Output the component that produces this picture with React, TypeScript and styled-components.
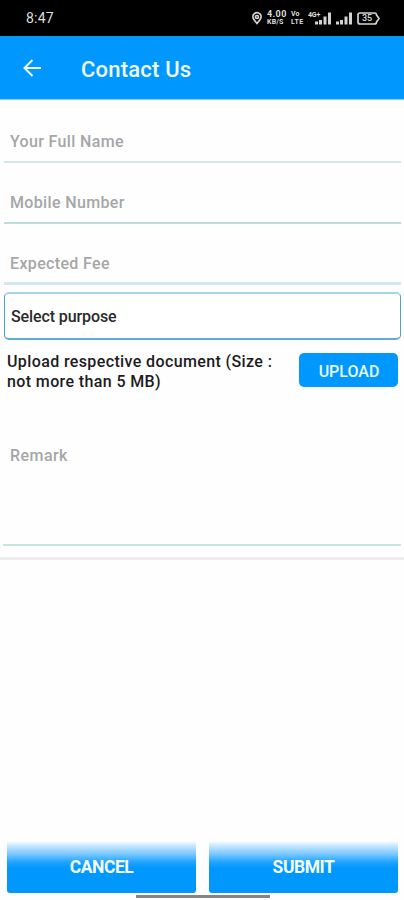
import React from "react";
import styled, { createGlobalStyle } from "styled-components";

const GlobalStyle = createGlobalStyle`
  *, *::before, *::after { box-sizing: border-box; }
  body { margin: 0; background: #fefefe; font-family: Roboto, "Liberation Sans", sans-serif; }
  button, input, textarea { font-family: inherit; }
`;

const Screen = styled.div`
  position: relative;
  display: flex;
  flex-direction: column;
  width: 404px;
  height: 900px;
  overflow: hidden;
  background: #fefefe;
`;

const StatusBar = styled.div`
  display: flex;
  justify-content: space-between;
  height: 36px;
  flex: none;
  padding: 0 24px 0 26px;
  background: #000;
  color: #dedede;
`;

const Clock = styled.span`
  font-size: 14px;
  line-height: 37px;
  letter-spacing: 0.2px;
`;

const StatusIcons = styled.div`
  display: flex;
  align-items: flex-start;
  padding-top: 11px;
`;

const PinIcon = styled.svg`
  width: 10px;
  height: 14px;
  margin-right: 5px;
`;

const Stack = styled.div<{ $width: number; $gap: number }>`
  display: flex;
  flex-direction: column;
  width: ${(p) => p.$width}px;
  margin: -1px ${(p) => p.$gap}px 0 0;
  font-weight: 700;
  white-space: nowrap;
`;

const StackLine = styled.span<{ $size: number; $height: number; $spacing?: number }>`
  font-size: ${(p) => p.$size}px;
  line-height: ${(p) => p.$height}px;
  letter-spacing: ${(p) => p.$spacing ?? 0}px;
`;

const NetworkLabel = styled.span`
  width: 12px;
  margin-right: -5px;
  font-size: 7px;
  font-weight: 700;
  line-height: 8px;
  letter-spacing: -0.2px;
  white-space: nowrap;
`;

const Bars = styled.svg<{ $gap: number }>`
  width: 16px;
  height: 14px;
  margin-right: ${(p) => p.$gap}px;
`;

const Battery = styled.div`
  position: relative;
  width: 23px;
  height: 14px;
  font-size: 9px;
  font-weight: 500;
  line-height: 15px;
  padding-left: 5px;
`;

const BatteryShape = styled.svg`
  position: absolute;
  inset: 0;
  width: 23px;
  height: 14px;
`;

const AppBar = styled.header`
  display: flex;
  align-items: center;
  height: 63px;
  flex: none;
  padding-left: 22px;
  background: #0098ff;
  color: #effbff;
`;

const BackButton = styled.button`
  display: flex;
  width: 22px;
  height: 22px;
  padding: 0;
  border: 0;
  background: none;
  color: inherit;
`;

const Title = styled.h1`
  margin: 4px 0 0 37px;
  font-size: 22px;
  font-weight: 500;
  line-height: 30px;
  letter-spacing: 0.2px;
`;

const Form = styled.main`
  display: flex;
  flex-direction: column;
  flex: none;
  height: 461px;
  padding: 2px 3px 0 4px;
  border-top: 1px solid #8bd0ff;
  border-bottom: 3px solid #ededed;
`;

const Field = styled.input<{ $line: string; $weight: number }>`
  display: block;
  width: 397px;
  height: 61px;
  padding: ${(p) => 17 + p.$weight}px 6px 0;
  border: 0;
  border-bottom: ${(p) => p.$weight}px solid ${(p) => p.$line};
  background: transparent;
  font-size: 16px;
  font-weight: 500;
  letter-spacing: 0.35px;
  outline: 0;
  &::placeholder { color: #a6a6a6; opacity: 1; }
`;

const Select = styled.button`
  height: 48px;
  width: 397px;
  margin-top: 7px;
  padding: 0 6px;
  flex: none;
  border: 1.5px solid #4ca4cd;
  border-top: 2px solid #a5d3e6;
  border-bottom: 2px solid #5fadcf;
  border-radius: 5px;
  background: #fff;
  color: #2a2a2a;
  text-align: left;
  font-size: 16px;
  font-weight: 500;
  letter-spacing: -0.1px;
`;

const UploadRow = styled.div`
  display: flex;
  justify-content: space-between;
  height: 48px;
  padding: 12px 3px 0;
`;

const UploadLabel = styled.p`
  width: 280px;
  margin: 0;
  color: #1c1c1c;
  font-size: 16px;
  font-weight: 500;
  line-height: 19.5px;
  letter-spacing: 0.38px;
  white-space: nowrap;
`;

const UploadButton = styled.button`
  width: 99px;
  height: 34px;
  flex: none;
  margin-top: 1px;
  padding: 2px 0 0 1px;
  border: 0;
  border-radius: 5px;
  background: #0098ff;
  color: #e8f9ff;
  font-size: 16px;
  font-weight: 500;
`;

const Remark = styled.textarea`
  display: block;
  width: 398px;
  height: 108px;
  margin: 50px 0 0 -1px;
  padding: 8px 7px;
  border: 0;
  border-bottom: 2px solid #c5e5dd;
  background: transparent;
  resize: none;
  outline: 0;
  font-size: 16px;
  font-weight: 500;
  line-height: 20px;
  letter-spacing: 0.45px;
  &::placeholder { color: #a6a6a6; opacity: 1; }
`;

const Actions = styled.footer`
  display: flex;
  gap: 13px;
  margin-top: auto;
  padding: 0 6px 7px 7px;
`;

const ActionButton = styled.button`
  flex: 1;
  height: 52px;
  padding: 0;
  border: 0;
  border-radius: 3px;
  background: linear-gradient(#fff 0, #d8efff 3px, #84ccff 12px, #22a4ff 21px, #0098ff 27px);
  color: #f5fcff;
  font-size: 17.5px;
  font-weight: 700;
  letter-spacing: -0.45px;
`;

const HomeIndicator = styled.div`
  position: absolute;
  left: 136px;
  bottom: 2px;
  width: 134px;
  height: 3px;
  background: #858585;
`;

const SignalBars = ({ gap }: { gap: number }) => (
  <Bars $gap={gap} viewBox="0 0 16 14" fill="#d2d2d2">
    <rect x="0" y="10.5" width="3" height="3" />
    <rect x="4" y="9" width="3" height="4.500" />
    <rect x="8.500" y="5.500" width="3" height="8" />
    <rect x="13" y="1.500" width="3" height="12" />
  </Bars>
);

export default function App() {
  return (
    <>
      <GlobalStyle />
      <Screen>
        <StatusBar>
          <Clock>8:47</Clock>
          <StatusIcons>
            <PinIcon viewBox="0 0 10 14" fill="none" stroke="#d5d5d5" strokeWidth="1.7">
              <path d="M5 12.500 2.200 9C.5 6.800.6 4.200 2 3c1.700-1.800 4.300-1.800 6 0 1.400 1.200 1.500 3.800-.2 6Z" />
              <circle cx="5" cy="6" r="1.5" />
            </PinIcon>
            <Stack $width={20} $gap={4}>
              <StackLine $size={9} $height={8} $spacing={0.4}>4.00</StackLine>
              <StackLine $size={7} $height={8} $spacing={0.2}>KB/S</StackLine>
            </Stack>
            <Stack $width={14} $gap={3}>
              <StackLine $size={7} $height={8}>Vo</StackLine>
              <StackLine $size={7} $height={8} $spacing={0.4}>LTE</StackLine>
            </Stack>
            <NetworkLabel>4G+</NetworkLabel>
            <SignalBars gap={5} />
            <SignalBars gap={5} />
            <Battery>
              <BatteryShape viewBox="0 0 23 14" fill="none" stroke="#d5d5d5" strokeWidth="1.7">
                <path d="M3 2h14.500q2 0 2 2l2.500 3.500-2.500 3.500q0 2-2 2H3q-2 0-2-2V4q0-2 2-2Z" />
              </BatteryShape>
              35
            </Battery>
          </StatusIcons>
        </StatusBar>
        <AppBar>
          <BackButton aria-label="Back">
            <svg width="22" height="22" viewBox="0 0 22 22" fill="none" stroke="currentColor" strokeWidth="2">
              <path d="M19 11H3M10.500 3 2.500 11l8 8" />
            </svg>
          </BackButton>
          <Title>Contact Us</Title>
        </AppBar>
        <Form>
          <Field $line="#d3e6e9" $weight={2} placeholder="Your Full Name" />
          <Field $line="#bfdcda" $weight={2} placeholder="Mobile Number" />
          <Field $line="#d3e9ef" $weight={3} placeholder="Expected Fee" />
          <Select>Select purpose</Select>
          <UploadRow>
            <UploadLabel>
              Upload respective document (Size :<br />
              not more than 5 MB)
            </UploadLabel>
            <UploadButton>UPLOAD</UploadButton>
          </UploadRow>
          <Remark placeholder="Remark" />
        </Form>
        <Actions>
          <ActionButton>CANCEL</ActionButton>
          <ActionButton>SUBMIT</ActionButton>
        </Actions>
        <HomeIndicator />
      </Screen>
    </>
  );
}
